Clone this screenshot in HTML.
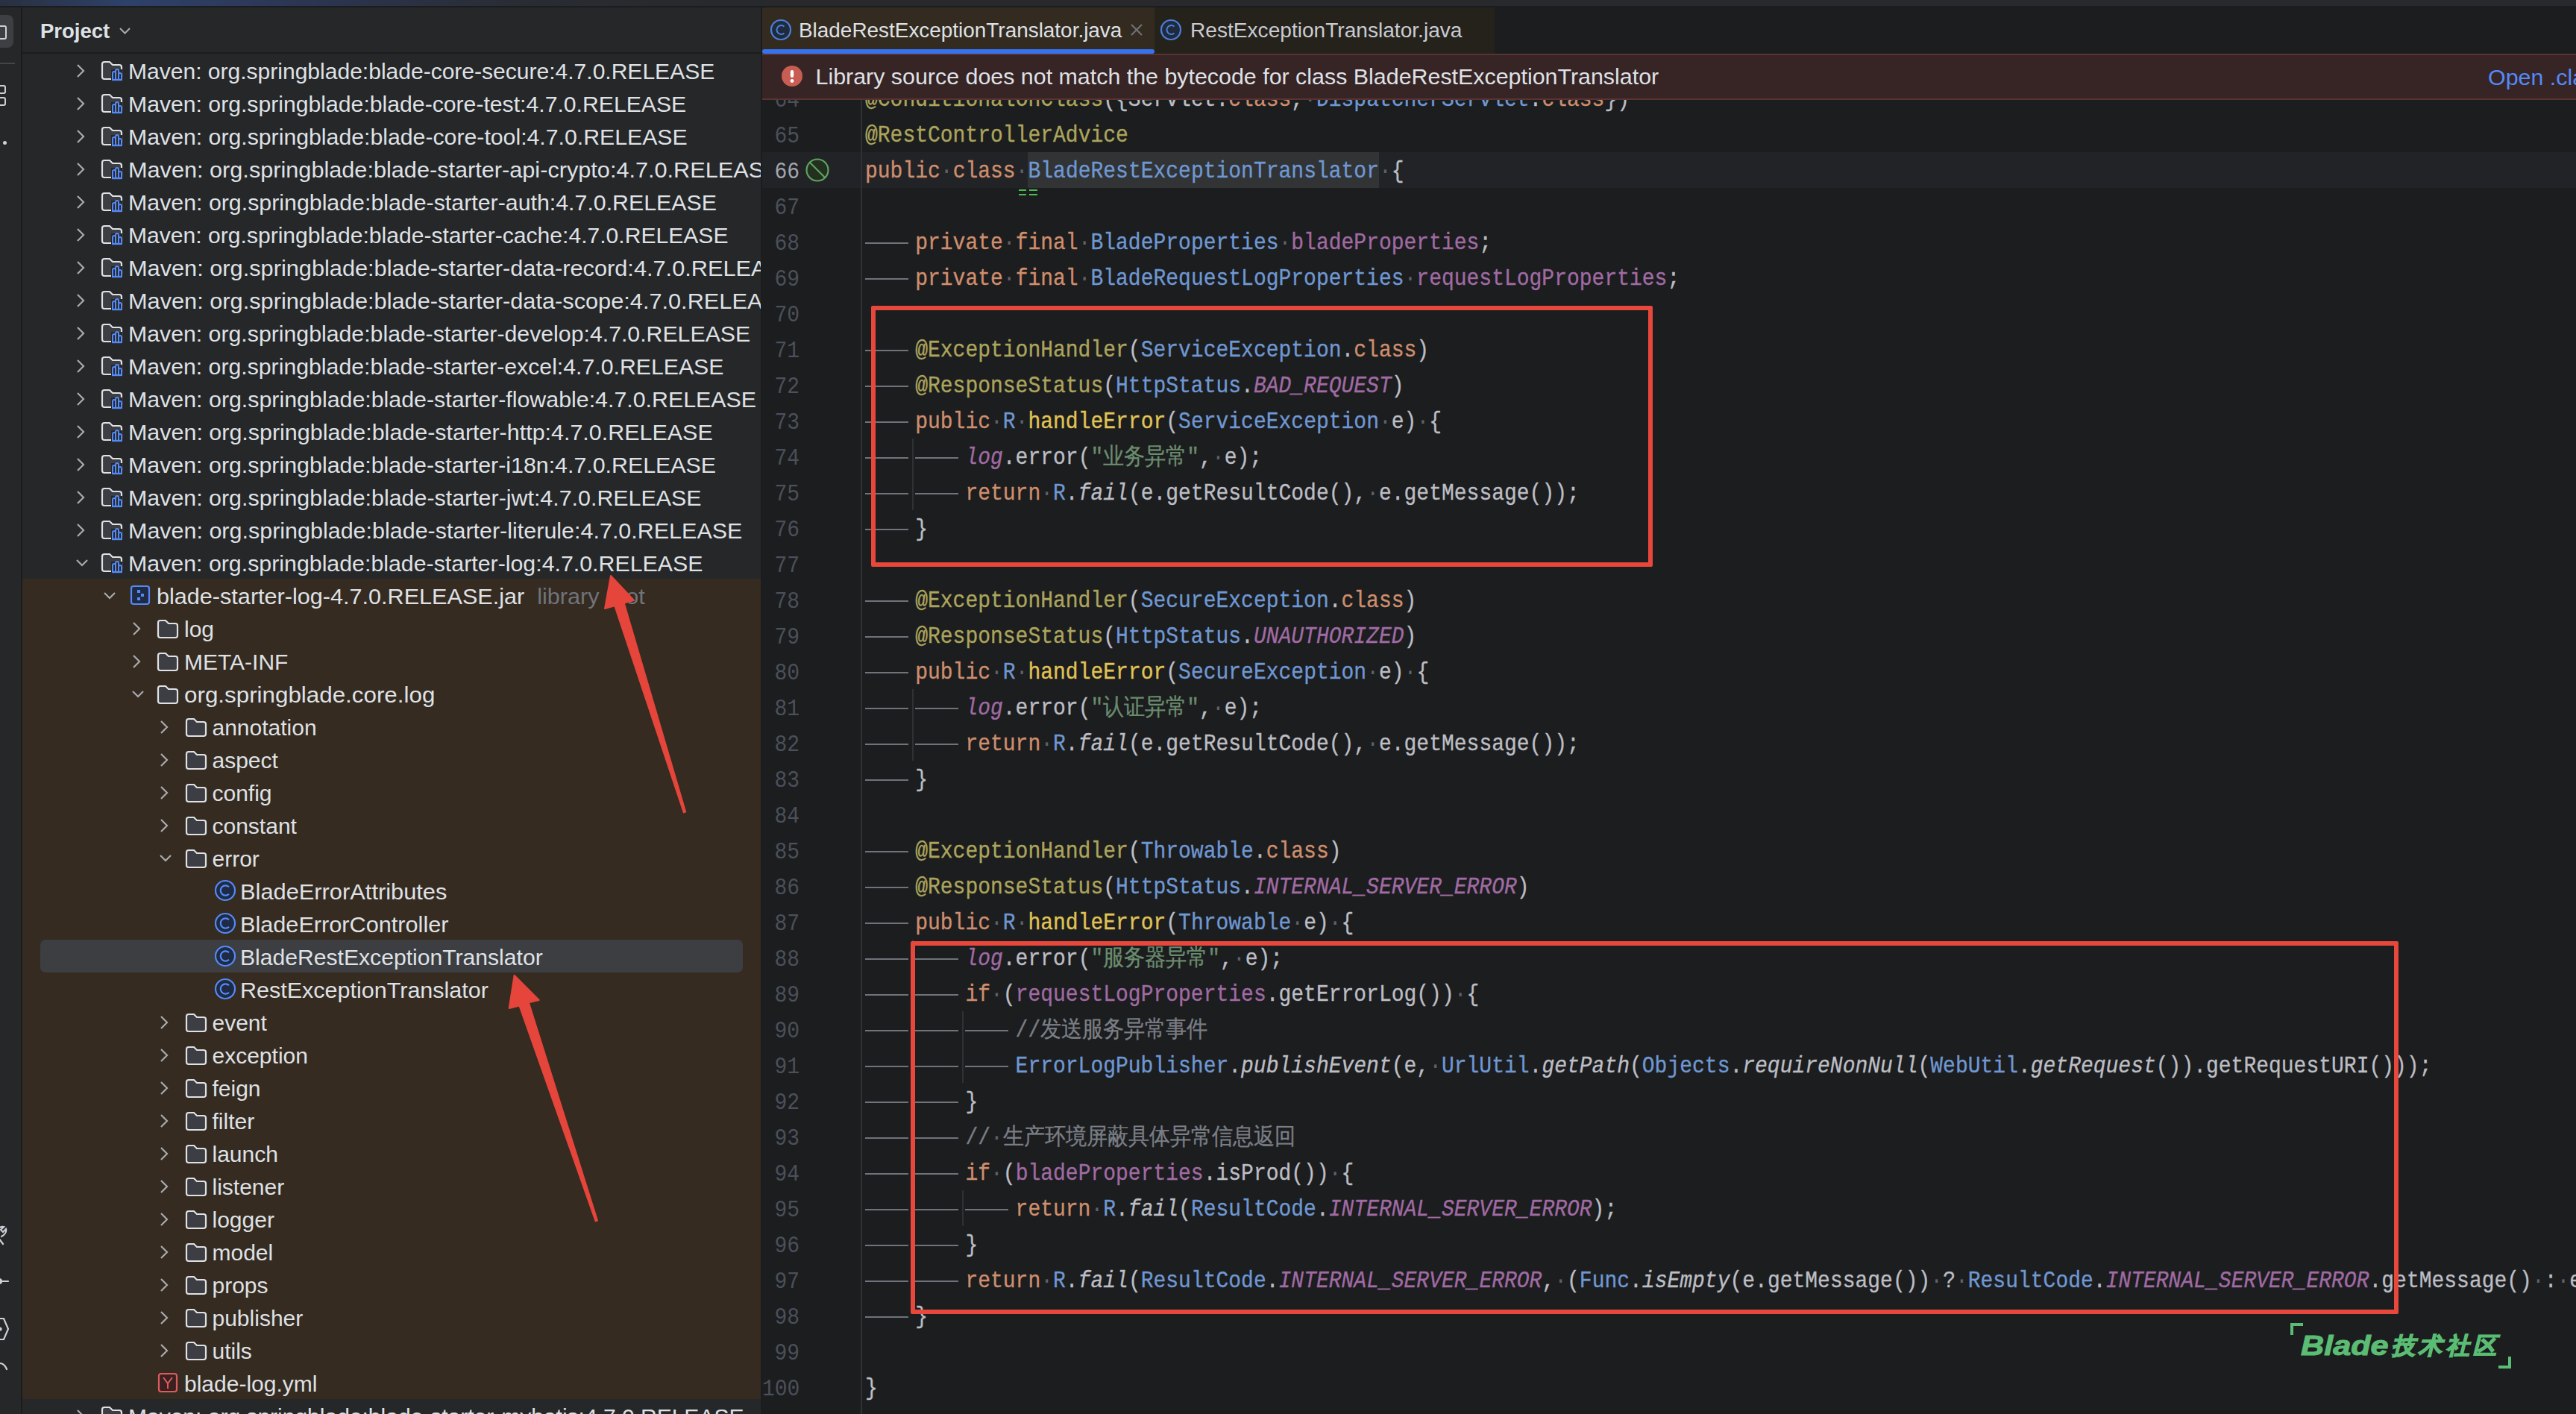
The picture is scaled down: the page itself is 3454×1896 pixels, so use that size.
<!DOCTYPE html><html><head><meta charset="utf-8"><style>
*{margin:0;padding:0;box-sizing:border-box}
html,body{width:3454px;height:1896px;overflow:hidden;background:#1c1d1f}
body{position:relative;font-family:"Liberation Sans",sans-serif;color:#dfe1e5}
.a{position:absolute}
.tr{position:absolute;height:44px;line-height:44px;font-size:30px;white-space:pre;color:#dfe1e5}
.cl{position:absolute;left:0;height:48px;line-height:48px;font-family:"Liberation Mono",monospace;font-size:28px;white-space:pre;color:#bcbec4;-webkit-text-stroke:0.3px currentColor;transform:scaleY(1.1);transform-origin:0 31px}
.ln{position:absolute;left:1022px;width:50px;text-align:right;height:48px;line-height:48px;font-family:"Liberation Mono",monospace;font-size:28px;color:#4b5059;white-space:pre;transform:scaleY(1.1);transform-origin:0 31px}
.k{color:#cf8e6d}.c{color:#6f98d2}.an{color:#aca55c}.m{color:#e0c456}.f{color:#a06ba3}
.sf{color:#a06ba3;font-style:italic}.si{font-style:italic}.s{color:#6a8c6e}.cm{color:#7a7e85}
.sp{color:#5e6166;-webkit-text-stroke:0}
.cj{display:inline-block;width:28px;text-align:center}
.tab{position:absolute;height:2px;background:#6f737a;width:58px}
.vg{position:absolute;width:2px;background:#2f3235}
</style></head><body>
<div class="a" style="left:0;top:0;width:3454px;height:8px;background:linear-gradient(90deg,#29303f 0px,#2e416a 170px,#2c3653 400px,#292c33 700px,#28292c 950px,#28292c 3454px)"></div>
<div class="a" style="left:0;top:8px;width:3454px;height:2px;background:#1b1c1e"></div>
<div class="a" style="left:0;top:10px;width:28px;height:1886px;background:#262729"></div>
<div class="a" style="left:28px;top:10px;width:2px;height:1886px;background:#1b1c1e"></div>
<div class="a" style="left:-10px;top:20px;width:28px;height:44px;border-radius:8px;background:#3d3f43"></div>
<div class="a" style="left:-4px;top:34px;width:13px;height:19px;border:2px solid #ced0d6;border-radius:3px"></div>
<div class="a" style="left:0;top:84px;width:20px;height:2px;background:#43454a"></div>
<div class="a" style="left:-4px;top:114px;width:12px;height:12px;border:2px solid #ced0d6;border-radius:3px"></div>
<div class="a" style="left:-4px;top:130px;width:12px;height:12px;border:2px solid #ced0d6;border-radius:3px"></div>
<div class="a" style="left:4px;top:189px;width:5px;height:5px;border-radius:50%;background:#ced0d6"></div>
<svg class="a" style="left:0;top:1630px" width="28" height="230" viewBox="0 0 28 230">
<g fill="none" stroke="#ced0d6" stroke-width="2.2" stroke-linecap="round">
<path d="M-2 30 L4 38 M2 28 C6 26 9 22 8 18 L4 22 L1 19 L5 15 C1 14 -3 17 -4 21"/>
<path d="M-6 88 H11"/><circle cx="-1" cy="88" r="3" fill="#ced0d6"/>
<path d="M-4 138 L5 138 L11 152 L5 166 L-4 166"/><circle cx="0" cy="152" r="1.5" fill="#ced0d6"/>
<path d="M-6 200 C0 196 6 198 9 206"/>
</g></svg>
<div class="a" style="left:30px;top:10px;width:990px;height:1886px;background:#262729"></div>
<div class="a" style="left:54px;top:14px;height:56px;line-height:56px;font-size:27.5px;font-weight:bold;color:#dfe1e5">Project</div>
<svg class="a" style="left:158px;top:36px" width="20" height="12" viewBox="0 0 20 12"><path d="M3 2 L9.5 8.5 L16 2" fill="none" stroke="#a8abb0" stroke-width="2"/></svg>
<div class="a" style="left:30px;top:70px;width:990px;height:2px;background:#1b1c1e"></div>
<div class="a" style="left:30px;top:775.5px;width:990px;height:1100.5px;background:#352b21"></div>
<div class="a" style="left:54px;top:1260px;width:942px;height:44px;border-radius:7px;background:#3c3e42"></div>
<div class="a" style="left:30px;top:72px;width:990px;height:1824px;overflow:hidden">
<svg class="a" style="left:67.5px;top:13.0px" width="20" height="20" viewBox="0 0 20 20"><path d="M6 2 L14 10 L6 18" fill="none" stroke="#a8abb0" stroke-width="2.2"/></svg>
<svg class="a" style="left:105.0px;top:9.0px" width="30" height="28" viewBox="0 0 30 28"><path d="M2 5 Q2 2 5 2 H12 L16 6 H25 Q28 6 28 9 V22 Q28 25 25 25 H5 Q2 25 2 22 Z" fill="#3c3e43" stroke="#dfe1e5" stroke-width="2.2"/><rect x="14" y="12" width="15" height="15" fill="#262729"/><path d="M16 26 V17 Q16 15 18 15 Q20 15 20 17 V26 M20 26 V14 Q20 12 22 12 Q24 12 24 14 V26 M24 26 V19 Q24 17 26 17 Q28 17 28 19 V26 Z" fill="none" stroke="#548af7" stroke-width="2"/><path d="M15 26 H28" stroke="#548af7" stroke-width="2.4"/></svg>
<div class="tr" style="left:142.0px;top:2px;transform:scaleX(1.0010);transform-origin:0 50%">Maven: org.springblade:blade-core-secure:4.7.0.RELEASE</div>
<svg class="a" style="left:67.5px;top:57.0px" width="20" height="20" viewBox="0 0 20 20"><path d="M6 2 L14 10 L6 18" fill="none" stroke="#a8abb0" stroke-width="2.2"/></svg>
<svg class="a" style="left:105.0px;top:53.0px" width="30" height="28" viewBox="0 0 30 28"><path d="M2 5 Q2 2 5 2 H12 L16 6 H25 Q28 6 28 9 V22 Q28 25 25 25 H5 Q2 25 2 22 Z" fill="#3c3e43" stroke="#dfe1e5" stroke-width="2.2"/><rect x="14" y="12" width="15" height="15" fill="#262729"/><path d="M16 26 V17 Q16 15 18 15 Q20 15 20 17 V26 M20 26 V14 Q20 12 22 12 Q24 12 24 14 V26 M24 26 V19 Q24 17 26 17 Q28 17 28 19 V26 Z" fill="none" stroke="#548af7" stroke-width="2"/><path d="M15 26 H28" stroke="#548af7" stroke-width="2.4"/></svg>
<div class="tr" style="left:142.0px;top:46px;transform:scaleX(1.0060);transform-origin:0 50%">Maven: org.springblade:blade-core-test:4.7.0.RELEASE</div>
<svg class="a" style="left:67.5px;top:101.0px" width="20" height="20" viewBox="0 0 20 20"><path d="M6 2 L14 10 L6 18" fill="none" stroke="#a8abb0" stroke-width="2.2"/></svg>
<svg class="a" style="left:105.0px;top:97.0px" width="30" height="28" viewBox="0 0 30 28"><path d="M2 5 Q2 2 5 2 H12 L16 6 H25 Q28 6 28 9 V22 Q28 25 25 25 H5 Q2 25 2 22 Z" fill="#3c3e43" stroke="#dfe1e5" stroke-width="2.2"/><rect x="14" y="12" width="15" height="15" fill="#262729"/><path d="M16 26 V17 Q16 15 18 15 Q20 15 20 17 V26 M20 26 V14 Q20 12 22 12 Q24 12 24 14 V26 M24 26 V19 Q24 17 26 17 Q28 17 28 19 V26 Z" fill="none" stroke="#548af7" stroke-width="2"/><path d="M15 26 H28" stroke="#548af7" stroke-width="2.4"/></svg>
<div class="tr" style="left:142.0px;top:90px;transform:scaleX(1.0080);transform-origin:0 50%">Maven: org.springblade:blade-core-tool:4.7.0.RELEASE</div>
<svg class="a" style="left:67.5px;top:145.0px" width="20" height="20" viewBox="0 0 20 20"><path d="M6 2 L14 10 L6 18" fill="none" stroke="#a8abb0" stroke-width="2.2"/></svg>
<svg class="a" style="left:105.0px;top:141.0px" width="30" height="28" viewBox="0 0 30 28"><path d="M2 5 Q2 2 5 2 H12 L16 6 H25 Q28 6 28 9 V22 Q28 25 25 25 H5 Q2 25 2 22 Z" fill="#3c3e43" stroke="#dfe1e5" stroke-width="2.2"/><rect x="14" y="12" width="15" height="15" fill="#262729"/><path d="M16 26 V17 Q16 15 18 15 Q20 15 20 17 V26 M20 26 V14 Q20 12 22 12 Q24 12 24 14 V26 M24 26 V19 Q24 17 26 17 Q28 17 28 19 V26 Z" fill="none" stroke="#548af7" stroke-width="2"/><path d="M15 26 H28" stroke="#548af7" stroke-width="2.4"/></svg>
<div class="tr" style="left:142.0px;top:134px;transform:scaleX(1.0220);transform-origin:0 50%">Maven: org.springblade:blade-starter-api-crypto:4.7.0.RELEASE</div>
<svg class="a" style="left:67.5px;top:189.0px" width="20" height="20" viewBox="0 0 20 20"><path d="M6 2 L14 10 L6 18" fill="none" stroke="#a8abb0" stroke-width="2.2"/></svg>
<svg class="a" style="left:105.0px;top:185.0px" width="30" height="28" viewBox="0 0 30 28"><path d="M2 5 Q2 2 5 2 H12 L16 6 H25 Q28 6 28 9 V22 Q28 25 25 25 H5 Q2 25 2 22 Z" fill="#3c3e43" stroke="#dfe1e5" stroke-width="2.2"/><rect x="14" y="12" width="15" height="15" fill="#262729"/><path d="M16 26 V17 Q16 15 18 15 Q20 15 20 17 V26 M20 26 V14 Q20 12 22 12 Q24 12 24 14 V26 M24 26 V19 Q24 17 26 17 Q28 17 28 19 V26 Z" fill="none" stroke="#548af7" stroke-width="2"/><path d="M15 26 H28" stroke="#548af7" stroke-width="2.4"/></svg>
<div class="tr" style="left:142.0px;top:178px;transform:scaleX(1.0110);transform-origin:0 50%">Maven: org.springblade:blade-starter-auth:4.7.0.RELEASE</div>
<svg class="a" style="left:67.5px;top:233.0px" width="20" height="20" viewBox="0 0 20 20"><path d="M6 2 L14 10 L6 18" fill="none" stroke="#a8abb0" stroke-width="2.2"/></svg>
<svg class="a" style="left:105.0px;top:229.0px" width="30" height="28" viewBox="0 0 30 28"><path d="M2 5 Q2 2 5 2 H12 L16 6 H25 Q28 6 28 9 V22 Q28 25 25 25 H5 Q2 25 2 22 Z" fill="#3c3e43" stroke="#dfe1e5" stroke-width="2.2"/><rect x="14" y="12" width="15" height="15" fill="#262729"/><path d="M16 26 V17 Q16 15 18 15 Q20 15 20 17 V26 M20 26 V14 Q20 12 22 12 Q24 12 24 14 V26 M24 26 V19 Q24 17 26 17 Q28 17 28 19 V26 Z" fill="none" stroke="#548af7" stroke-width="2"/><path d="M15 26 H28" stroke="#548af7" stroke-width="2.4"/></svg>
<div class="tr" style="left:142.0px;top:222px;transform:scaleX(1.0030);transform-origin:0 50%">Maven: org.springblade:blade-starter-cache:4.7.0.RELEASE</div>
<svg class="a" style="left:67.5px;top:277.0px" width="20" height="20" viewBox="0 0 20 20"><path d="M6 2 L14 10 L6 18" fill="none" stroke="#a8abb0" stroke-width="2.2"/></svg>
<svg class="a" style="left:105.0px;top:273.0px" width="30" height="28" viewBox="0 0 30 28"><path d="M2 5 Q2 2 5 2 H12 L16 6 H25 Q28 6 28 9 V22 Q28 25 25 25 H5 Q2 25 2 22 Z" fill="#3c3e43" stroke="#dfe1e5" stroke-width="2.2"/><rect x="14" y="12" width="15" height="15" fill="#262729"/><path d="M16 26 V17 Q16 15 18 15 Q20 15 20 17 V26 M20 26 V14 Q20 12 22 12 Q24 12 24 14 V26 M24 26 V19 Q24 17 26 17 Q28 17 28 19 V26 Z" fill="none" stroke="#548af7" stroke-width="2"/><path d="M15 26 H28" stroke="#548af7" stroke-width="2.4"/></svg>
<div class="tr" style="left:142.0px;top:266px;transform:scaleX(1.0240);transform-origin:0 50%">Maven: org.springblade:blade-starter-data-record:4.7.0.RELEASE</div>
<svg class="a" style="left:67.5px;top:321.0px" width="20" height="20" viewBox="0 0 20 20"><path d="M6 2 L14 10 L6 18" fill="none" stroke="#a8abb0" stroke-width="2.2"/></svg>
<svg class="a" style="left:105.0px;top:317.0px" width="30" height="28" viewBox="0 0 30 28"><path d="M2 5 Q2 2 5 2 H12 L16 6 H25 Q28 6 28 9 V22 Q28 25 25 25 H5 Q2 25 2 22 Z" fill="#3c3e43" stroke="#dfe1e5" stroke-width="2.2"/><rect x="14" y="12" width="15" height="15" fill="#262729"/><path d="M16 26 V17 Q16 15 18 15 Q20 15 20 17 V26 M20 26 V14 Q20 12 22 12 Q24 12 24 14 V26 M24 26 V19 Q24 17 26 17 Q28 17 28 19 V26 Z" fill="none" stroke="#548af7" stroke-width="2"/><path d="M15 26 H28" stroke="#548af7" stroke-width="2.4"/></svg>
<div class="tr" style="left:142.0px;top:310px;transform:scaleX(1.0240);transform-origin:0 50%">Maven: org.springblade:blade-starter-data-scope:4.7.0.RELEASE</div>
<svg class="a" style="left:67.5px;top:365.0px" width="20" height="20" viewBox="0 0 20 20"><path d="M6 2 L14 10 L6 18" fill="none" stroke="#a8abb0" stroke-width="2.2"/></svg>
<svg class="a" style="left:105.0px;top:361.0px" width="30" height="28" viewBox="0 0 30 28"><path d="M2 5 Q2 2 5 2 H12 L16 6 H25 Q28 6 28 9 V22 Q28 25 25 25 H5 Q2 25 2 22 Z" fill="#3c3e43" stroke="#dfe1e5" stroke-width="2.2"/><rect x="14" y="12" width="15" height="15" fill="#262729"/><path d="M16 26 V17 Q16 15 18 15 Q20 15 20 17 V26 M20 26 V14 Q20 12 22 12 Q24 12 24 14 V26 M24 26 V19 Q24 17 26 17 Q28 17 28 19 V26 Z" fill="none" stroke="#548af7" stroke-width="2"/><path d="M15 26 H28" stroke="#548af7" stroke-width="2.4"/></svg>
<div class="tr" style="left:142.0px;top:354px;transform:scaleX(1.0085);transform-origin:0 50%">Maven: org.springblade:blade-starter-develop:4.7.0.RELEASE</div>
<svg class="a" style="left:67.5px;top:409.0px" width="20" height="20" viewBox="0 0 20 20"><path d="M6 2 L14 10 L6 18" fill="none" stroke="#a8abb0" stroke-width="2.2"/></svg>
<svg class="a" style="left:105.0px;top:405.0px" width="30" height="28" viewBox="0 0 30 28"><path d="M2 5 Q2 2 5 2 H12 L16 6 H25 Q28 6 28 9 V22 Q28 25 25 25 H5 Q2 25 2 22 Z" fill="#3c3e43" stroke="#dfe1e5" stroke-width="2.2"/><rect x="14" y="12" width="15" height="15" fill="#262729"/><path d="M16 26 V17 Q16 15 18 15 Q20 15 20 17 V26 M20 26 V14 Q20 12 22 12 Q24 12 24 14 V26 M24 26 V19 Q24 17 26 17 Q28 17 28 19 V26 Z" fill="none" stroke="#548af7" stroke-width="2"/><path d="M15 26 H28" stroke="#548af7" stroke-width="2.4"/></svg>
<div class="tr" style="left:142.0px;top:398px;transform:scaleX(1.0080);transform-origin:0 50%">Maven: org.springblade:blade-starter-excel:4.7.0.RELEASE</div>
<svg class="a" style="left:67.5px;top:453.0px" width="20" height="20" viewBox="0 0 20 20"><path d="M6 2 L14 10 L6 18" fill="none" stroke="#a8abb0" stroke-width="2.2"/></svg>
<svg class="a" style="left:105.0px;top:449.0px" width="30" height="28" viewBox="0 0 30 28"><path d="M2 5 Q2 2 5 2 H12 L16 6 H25 Q28 6 28 9 V22 Q28 25 25 25 H5 Q2 25 2 22 Z" fill="#3c3e43" stroke="#dfe1e5" stroke-width="2.2"/><rect x="14" y="12" width="15" height="15" fill="#262729"/><path d="M16 26 V17 Q16 15 18 15 Q20 15 20 17 V26 M20 26 V14 Q20 12 22 12 Q24 12 24 14 V26 M24 26 V19 Q24 17 26 17 Q28 17 28 19 V26 Z" fill="none" stroke="#548af7" stroke-width="2"/><path d="M15 26 H28" stroke="#548af7" stroke-width="2.4"/></svg>
<div class="tr" style="left:142.0px;top:442px;transform:scaleX(1.0120);transform-origin:0 50%">Maven: org.springblade:blade-starter-flowable:4.7.0.RELEASE</div>
<svg class="a" style="left:67.5px;top:497.0px" width="20" height="20" viewBox="0 0 20 20"><path d="M6 2 L14 10 L6 18" fill="none" stroke="#a8abb0" stroke-width="2.2"/></svg>
<svg class="a" style="left:105.0px;top:493.0px" width="30" height="28" viewBox="0 0 30 28"><path d="M2 5 Q2 2 5 2 H12 L16 6 H25 Q28 6 28 9 V22 Q28 25 25 25 H5 Q2 25 2 22 Z" fill="#3c3e43" stroke="#dfe1e5" stroke-width="2.2"/><rect x="14" y="12" width="15" height="15" fill="#262729"/><path d="M16 26 V17 Q16 15 18 15 Q20 15 20 17 V26 M20 26 V14 Q20 12 22 12 Q24 12 24 14 V26 M24 26 V19 Q24 17 26 17 Q28 17 28 19 V26 Z" fill="none" stroke="#548af7" stroke-width="2"/><path d="M15 26 H28" stroke="#548af7" stroke-width="2.4"/></svg>
<div class="tr" style="left:142.0px;top:486px;transform:scaleX(1.0150);transform-origin:0 50%">Maven: org.springblade:blade-starter-htt<span>p</span>:4.7.0.RELEASE</div>
<svg class="a" style="left:67.5px;top:541.0px" width="20" height="20" viewBox="0 0 20 20"><path d="M6 2 L14 10 L6 18" fill="none" stroke="#a8abb0" stroke-width="2.2"/></svg>
<svg class="a" style="left:105.0px;top:537.0px" width="30" height="28" viewBox="0 0 30 28"><path d="M2 5 Q2 2 5 2 H12 L16 6 H25 Q28 6 28 9 V22 Q28 25 25 25 H5 Q2 25 2 22 Z" fill="#3c3e43" stroke="#dfe1e5" stroke-width="2.2"/><rect x="14" y="12" width="15" height="15" fill="#262729"/><path d="M16 26 V17 Q16 15 18 15 Q20 15 20 17 V26 M20 26 V14 Q20 12 22 12 Q24 12 24 14 V26 M24 26 V19 Q24 17 26 17 Q28 17 28 19 V26 Z" fill="none" stroke="#548af7" stroke-width="2"/><path d="M15 26 H28" stroke="#548af7" stroke-width="2.4"/></svg>
<div class="tr" style="left:142.0px;top:530px;transform:scaleX(1.0120);transform-origin:0 50%">Maven: org.springblade:blade-starter-i18n:4.7.0.RELEASE</div>
<svg class="a" style="left:67.5px;top:585.0px" width="20" height="20" viewBox="0 0 20 20"><path d="M6 2 L14 10 L6 18" fill="none" stroke="#a8abb0" stroke-width="2.2"/></svg>
<svg class="a" style="left:105.0px;top:581.0px" width="30" height="28" viewBox="0 0 30 28"><path d="M2 5 Q2 2 5 2 H12 L16 6 H25 Q28 6 28 9 V22 Q28 25 25 25 H5 Q2 25 2 22 Z" fill="#3c3e43" stroke="#dfe1e5" stroke-width="2.2"/><rect x="14" y="12" width="15" height="15" fill="#262729"/><path d="M16 26 V17 Q16 15 18 15 Q20 15 20 17 V26 M20 26 V14 Q20 12 22 12 Q24 12 24 14 V26 M24 26 V19 Q24 17 26 17 Q28 17 28 19 V26 Z" fill="none" stroke="#548af7" stroke-width="2"/><path d="M15 26 H28" stroke="#548af7" stroke-width="2.4"/></svg>
<div class="tr" style="left:142.0px;top:574px;transform:scaleX(1.0130);transform-origin:0 50%">Maven: org.springblade:blade-starter-jwt:4.7.0.RELEASE</div>
<svg class="a" style="left:67.5px;top:629.0px" width="20" height="20" viewBox="0 0 20 20"><path d="M6 2 L14 10 L6 18" fill="none" stroke="#a8abb0" stroke-width="2.2"/></svg>
<svg class="a" style="left:105.0px;top:625.0px" width="30" height="28" viewBox="0 0 30 28"><path d="M2 5 Q2 2 5 2 H12 L16 6 H25 Q28 6 28 9 V22 Q28 25 25 25 H5 Q2 25 2 22 Z" fill="#3c3e43" stroke="#dfe1e5" stroke-width="2.2"/><rect x="14" y="12" width="15" height="15" fill="#262729"/><path d="M16 26 V17 Q16 15 18 15 Q20 15 20 17 V26 M20 26 V14 Q20 12 22 12 Q24 12 24 14 V26 M24 26 V19 Q24 17 26 17 Q28 17 28 19 V26 Z" fill="none" stroke="#548af7" stroke-width="2"/><path d="M15 26 H28" stroke="#548af7" stroke-width="2.4"/></svg>
<div class="tr" style="left:142.0px;top:618px;transform:scaleX(1.0160);transform-origin:0 50%">Maven: org.springblade:blade-starter-literule:4.7.0.RELEASE</div>
<svg class="a" style="left:69.5px;top:673.0px" width="20" height="20" viewBox="0 0 20 20"><path d="M3 6 L10 13 L17 6" fill="none" stroke="#a8abb0" stroke-width="2.2"/></svg>
<svg class="a" style="left:105.0px;top:669.0px" width="30" height="28" viewBox="0 0 30 28"><path d="M2 5 Q2 2 5 2 H12 L16 6 H25 Q28 6 28 9 V22 Q28 25 25 25 H5 Q2 25 2 22 Z" fill="#3c3e43" stroke="#dfe1e5" stroke-width="2.2"/><rect x="14" y="12" width="15" height="15" fill="#262729"/><path d="M16 26 V17 Q16 15 18 15 Q20 15 20 17 V26 M20 26 V14 Q20 12 22 12 Q24 12 24 14 V26 M24 26 V19 Q24 17 26 17 Q28 17 28 19 V26 Z" fill="none" stroke="#548af7" stroke-width="2"/><path d="M15 26 H28" stroke="#548af7" stroke-width="2.4"/></svg>
<div class="tr" style="left:142.0px;top:662px;transform:scaleX(1.0110);transform-origin:0 50%">Maven: org.springblade:blade-starter-log:4.7.0.RELEASE</div>
<svg class="a" style="left:107.0px;top:717.0px" width="20" height="20" viewBox="0 0 20 20"><path d="M3 6 L10 13 L17 6" fill="none" stroke="#a8abb0" stroke-width="2.2"/></svg>
<svg class="a" style="left:143.5px;top:712.0px" width="28" height="28" viewBox="0 0 28 28"><rect x="2" y="2" width="24" height="24" rx="3" fill="#1f2a44" stroke="#548af7" stroke-width="2.2"/><rect x="10" y="7" width="4" height="4" fill="#548af7"/><rect x="15" y="12" width="4" height="4" fill="#548af7"/><rect x="10" y="17" width="4" height="4" fill="#548af7"/></svg>
<div class="tr" style="left:179.5px;top:706px;transform:scaleX(1.0200);transform-origin:0 50%">blade-starter-log-4.7.0.RELEASE.jar  <span style="color:#70747b">library root</span></div>
<svg class="a" style="left:142.5px;top:761.0px" width="20" height="20" viewBox="0 0 20 20"><path d="M6 2 L14 10 L6 18" fill="none" stroke="#a8abb0" stroke-width="2.2"/></svg>
<svg class="a" style="left:180.0px;top:758.0px" width="30" height="28" viewBox="0 0 30 28"><path d="M2 5 Q2 2 5 2 H12 L16 6 H25 Q28 6 28 9 V22 Q28 25 25 25 H5 Q2 25 2 22 Z" fill="#3c3e43" stroke="#dfe1e5" stroke-width="2.2"/></svg>
<div class="tr" style="left:217.0px;top:750px">log</div>
<svg class="a" style="left:142.5px;top:805.0px" width="20" height="20" viewBox="0 0 20 20"><path d="M6 2 L14 10 L6 18" fill="none" stroke="#a8abb0" stroke-width="2.2"/></svg>
<svg class="a" style="left:180.0px;top:802.0px" width="30" height="28" viewBox="0 0 30 28"><path d="M2 5 Q2 2 5 2 H12 L16 6 H25 Q28 6 28 9 V22 Q28 25 25 25 H5 Q2 25 2 22 Z" fill="#3c3e43" stroke="#dfe1e5" stroke-width="2.2"/></svg>
<div class="tr" style="left:217.0px;top:794px">META-INF</div>
<svg class="a" style="left:144.5px;top:849.0px" width="20" height="20" viewBox="0 0 20 20"><path d="M3 6 L10 13 L17 6" fill="none" stroke="#a8abb0" stroke-width="2.2"/></svg>
<svg class="a" style="left:180.0px;top:846.0px" width="30" height="28" viewBox="0 0 30 28"><path d="M2 5 Q2 2 5 2 H12 L16 6 H25 Q28 6 28 9 V22 Q28 25 25 25 H5 Q2 25 2 22 Z" fill="#3c3e43" stroke="#dfe1e5" stroke-width="2.2"/></svg>
<div class="tr" style="left:217.0px;top:838px;transform:scaleX(1.0450);transform-origin:0 50%">org.springblade.core.log</div>
<svg class="a" style="left:180.0px;top:893.0px" width="20" height="20" viewBox="0 0 20 20"><path d="M6 2 L14 10 L6 18" fill="none" stroke="#a8abb0" stroke-width="2.2"/></svg>
<svg class="a" style="left:217.5px;top:890.0px" width="30" height="28" viewBox="0 0 30 28"><path d="M2 5 Q2 2 5 2 H12 L16 6 H25 Q28 6 28 9 V22 Q28 25 25 25 H5 Q2 25 2 22 Z" fill="#3c3e43" stroke="#dfe1e5" stroke-width="2.2"/></svg>
<div class="tr" style="left:254.5px;top:882px">annotation</div>
<svg class="a" style="left:180.0px;top:937.0px" width="20" height="20" viewBox="0 0 20 20"><path d="M6 2 L14 10 L6 18" fill="none" stroke="#a8abb0" stroke-width="2.2"/></svg>
<svg class="a" style="left:217.5px;top:934.0px" width="30" height="28" viewBox="0 0 30 28"><path d="M2 5 Q2 2 5 2 H12 L16 6 H25 Q28 6 28 9 V22 Q28 25 25 25 H5 Q2 25 2 22 Z" fill="#3c3e43" stroke="#dfe1e5" stroke-width="2.2"/></svg>
<div class="tr" style="left:254.5px;top:926px">aspect</div>
<svg class="a" style="left:180.0px;top:981.0px" width="20" height="20" viewBox="0 0 20 20"><path d="M6 2 L14 10 L6 18" fill="none" stroke="#a8abb0" stroke-width="2.2"/></svg>
<svg class="a" style="left:217.5px;top:978.0px" width="30" height="28" viewBox="0 0 30 28"><path d="M2 5 Q2 2 5 2 H12 L16 6 H25 Q28 6 28 9 V22 Q28 25 25 25 H5 Q2 25 2 22 Z" fill="#3c3e43" stroke="#dfe1e5" stroke-width="2.2"/></svg>
<div class="tr" style="left:254.5px;top:970px">config</div>
<svg class="a" style="left:180.0px;top:1025.0px" width="20" height="20" viewBox="0 0 20 20"><path d="M6 2 L14 10 L6 18" fill="none" stroke="#a8abb0" stroke-width="2.2"/></svg>
<svg class="a" style="left:217.5px;top:1022.0px" width="30" height="28" viewBox="0 0 30 28"><path d="M2 5 Q2 2 5 2 H12 L16 6 H25 Q28 6 28 9 V22 Q28 25 25 25 H5 Q2 25 2 22 Z" fill="#3c3e43" stroke="#dfe1e5" stroke-width="2.2"/></svg>
<div class="tr" style="left:254.5px;top:1014px">constant</div>
<svg class="a" style="left:182.0px;top:1069.0px" width="20" height="20" viewBox="0 0 20 20"><path d="M3 6 L10 13 L17 6" fill="none" stroke="#a8abb0" stroke-width="2.2"/></svg>
<svg class="a" style="left:217.5px;top:1066.0px" width="30" height="28" viewBox="0 0 30 28"><path d="M2 5 Q2 2 5 2 H12 L16 6 H25 Q28 6 28 9 V22 Q28 25 25 25 H5 Q2 25 2 22 Z" fill="#3c3e43" stroke="#dfe1e5" stroke-width="2.2"/></svg>
<div class="tr" style="left:254.5px;top:1058px">error</div>
<svg class="a" style="left:256.5px;top:1107.0px" width="30" height="30" viewBox="0 0 30 30"><circle cx="15" cy="15" r="13" fill="#1f2a44" stroke="#548af7" stroke-width="2.2"/><path d="M20 10.3 A6.6 6.6 0 1 0 20 19.7" fill="none" stroke="#548af7" stroke-width="2.2"/></svg>
<div class="tr" style="left:292.0px;top:1102px;transform:scaleX(1.0270);transform-origin:0 50%">BladeErrorAttributes</div>
<svg class="a" style="left:256.5px;top:1151.0px" width="30" height="30" viewBox="0 0 30 30"><circle cx="15" cy="15" r="13" fill="#1f2a44" stroke="#548af7" stroke-width="2.2"/><path d="M20 10.3 A6.6 6.6 0 1 0 20 19.7" fill="none" stroke="#548af7" stroke-width="2.2"/></svg>
<div class="tr" style="left:292.0px;top:1146px;transform:scaleX(1.0220);transform-origin:0 50%">BladeErrorController</div>
<svg class="a" style="left:256.5px;top:1195.0px" width="30" height="30" viewBox="0 0 30 30"><circle cx="15" cy="15" r="13" fill="#1f2a44" stroke="#548af7" stroke-width="2.2"/><path d="M20 10.3 A6.6 6.6 0 1 0 20 19.7" fill="none" stroke="#548af7" stroke-width="2.2"/></svg>
<div class="tr" style="left:292.0px;top:1190px;transform:scaleX(1.0040);transform-origin:0 50%">BladeRestExceptionTranslator</div>
<svg class="a" style="left:256.5px;top:1239.0px" width="30" height="30" viewBox="0 0 30 30"><circle cx="15" cy="15" r="13" fill="#1f2a44" stroke="#548af7" stroke-width="2.2"/><path d="M20 10.3 A6.6 6.6 0 1 0 20 19.7" fill="none" stroke="#548af7" stroke-width="2.2"/></svg>
<div class="tr" style="left:292.0px;top:1234px;transform:scaleX(1.0170);transform-origin:0 50%">RestExceptionTranslator</div>
<svg class="a" style="left:180.0px;top:1289.0px" width="20" height="20" viewBox="0 0 20 20"><path d="M6 2 L14 10 L6 18" fill="none" stroke="#a8abb0" stroke-width="2.2"/></svg>
<svg class="a" style="left:217.5px;top:1286.0px" width="30" height="28" viewBox="0 0 30 28"><path d="M2 5 Q2 2 5 2 H12 L16 6 H25 Q28 6 28 9 V22 Q28 25 25 25 H5 Q2 25 2 22 Z" fill="#3c3e43" stroke="#dfe1e5" stroke-width="2.2"/></svg>
<div class="tr" style="left:254.5px;top:1278px">event</div>
<svg class="a" style="left:180.0px;top:1333.0px" width="20" height="20" viewBox="0 0 20 20"><path d="M6 2 L14 10 L6 18" fill="none" stroke="#a8abb0" stroke-width="2.2"/></svg>
<svg class="a" style="left:217.5px;top:1330.0px" width="30" height="28" viewBox="0 0 30 28"><path d="M2 5 Q2 2 5 2 H12 L16 6 H25 Q28 6 28 9 V22 Q28 25 25 25 H5 Q2 25 2 22 Z" fill="#3c3e43" stroke="#dfe1e5" stroke-width="2.2"/></svg>
<div class="tr" style="left:254.5px;top:1322px">exception</div>
<svg class="a" style="left:180.0px;top:1377.0px" width="20" height="20" viewBox="0 0 20 20"><path d="M6 2 L14 10 L6 18" fill="none" stroke="#a8abb0" stroke-width="2.2"/></svg>
<svg class="a" style="left:217.5px;top:1374.0px" width="30" height="28" viewBox="0 0 30 28"><path d="M2 5 Q2 2 5 2 H12 L16 6 H25 Q28 6 28 9 V22 Q28 25 25 25 H5 Q2 25 2 22 Z" fill="#3c3e43" stroke="#dfe1e5" stroke-width="2.2"/></svg>
<div class="tr" style="left:254.5px;top:1366px">feign</div>
<svg class="a" style="left:180.0px;top:1421.0px" width="20" height="20" viewBox="0 0 20 20"><path d="M6 2 L14 10 L6 18" fill="none" stroke="#a8abb0" stroke-width="2.2"/></svg>
<svg class="a" style="left:217.5px;top:1418.0px" width="30" height="28" viewBox="0 0 30 28"><path d="M2 5 Q2 2 5 2 H12 L16 6 H25 Q28 6 28 9 V22 Q28 25 25 25 H5 Q2 25 2 22 Z" fill="#3c3e43" stroke="#dfe1e5" stroke-width="2.2"/></svg>
<div class="tr" style="left:254.5px;top:1410px">filter</div>
<svg class="a" style="left:180.0px;top:1465.0px" width="20" height="20" viewBox="0 0 20 20"><path d="M6 2 L14 10 L6 18" fill="none" stroke="#a8abb0" stroke-width="2.2"/></svg>
<svg class="a" style="left:217.5px;top:1462.0px" width="30" height="28" viewBox="0 0 30 28"><path d="M2 5 Q2 2 5 2 H12 L16 6 H25 Q28 6 28 9 V22 Q28 25 25 25 H5 Q2 25 2 22 Z" fill="#3c3e43" stroke="#dfe1e5" stroke-width="2.2"/></svg>
<div class="tr" style="left:254.5px;top:1454px">launch</div>
<svg class="a" style="left:180.0px;top:1509.0px" width="20" height="20" viewBox="0 0 20 20"><path d="M6 2 L14 10 L6 18" fill="none" stroke="#a8abb0" stroke-width="2.2"/></svg>
<svg class="a" style="left:217.5px;top:1506.0px" width="30" height="28" viewBox="0 0 30 28"><path d="M2 5 Q2 2 5 2 H12 L16 6 H25 Q28 6 28 9 V22 Q28 25 25 25 H5 Q2 25 2 22 Z" fill="#3c3e43" stroke="#dfe1e5" stroke-width="2.2"/></svg>
<div class="tr" style="left:254.5px;top:1498px">listener</div>
<svg class="a" style="left:180.0px;top:1553.0px" width="20" height="20" viewBox="0 0 20 20"><path d="M6 2 L14 10 L6 18" fill="none" stroke="#a8abb0" stroke-width="2.2"/></svg>
<svg class="a" style="left:217.5px;top:1550.0px" width="30" height="28" viewBox="0 0 30 28"><path d="M2 5 Q2 2 5 2 H12 L16 6 H25 Q28 6 28 9 V22 Q28 25 25 25 H5 Q2 25 2 22 Z" fill="#3c3e43" stroke="#dfe1e5" stroke-width="2.2"/></svg>
<div class="tr" style="left:254.5px;top:1542px">logger</div>
<svg class="a" style="left:180.0px;top:1597.0px" width="20" height="20" viewBox="0 0 20 20"><path d="M6 2 L14 10 L6 18" fill="none" stroke="#a8abb0" stroke-width="2.2"/></svg>
<svg class="a" style="left:217.5px;top:1594.0px" width="30" height="28" viewBox="0 0 30 28"><path d="M2 5 Q2 2 5 2 H12 L16 6 H25 Q28 6 28 9 V22 Q28 25 25 25 H5 Q2 25 2 22 Z" fill="#3c3e43" stroke="#dfe1e5" stroke-width="2.2"/></svg>
<div class="tr" style="left:254.5px;top:1586px">model</div>
<svg class="a" style="left:180.0px;top:1641.0px" width="20" height="20" viewBox="0 0 20 20"><path d="M6 2 L14 10 L6 18" fill="none" stroke="#a8abb0" stroke-width="2.2"/></svg>
<svg class="a" style="left:217.5px;top:1638.0px" width="30" height="28" viewBox="0 0 30 28"><path d="M2 5 Q2 2 5 2 H12 L16 6 H25 Q28 6 28 9 V22 Q28 25 25 25 H5 Q2 25 2 22 Z" fill="#3c3e43" stroke="#dfe1e5" stroke-width="2.2"/></svg>
<div class="tr" style="left:254.5px;top:1630px">props</div>
<svg class="a" style="left:180.0px;top:1685.0px" width="20" height="20" viewBox="0 0 20 20"><path d="M6 2 L14 10 L6 18" fill="none" stroke="#a8abb0" stroke-width="2.2"/></svg>
<svg class="a" style="left:217.5px;top:1682.0px" width="30" height="28" viewBox="0 0 30 28"><path d="M2 5 Q2 2 5 2 H12 L16 6 H25 Q28 6 28 9 V22 Q28 25 25 25 H5 Q2 25 2 22 Z" fill="#3c3e43" stroke="#dfe1e5" stroke-width="2.2"/></svg>
<div class="tr" style="left:254.5px;top:1674px">publisher</div>
<svg class="a" style="left:180.0px;top:1729.0px" width="20" height="20" viewBox="0 0 20 20"><path d="M6 2 L14 10 L6 18" fill="none" stroke="#a8abb0" stroke-width="2.2"/></svg>
<svg class="a" style="left:217.5px;top:1726.0px" width="30" height="28" viewBox="0 0 30 28"><path d="M2 5 Q2 2 5 2 H12 L16 6 H25 Q28 6 28 9 V22 Q28 25 25 25 H5 Q2 25 2 22 Z" fill="#3c3e43" stroke="#dfe1e5" stroke-width="2.2"/></svg>
<div class="tr" style="left:254.5px;top:1718px">utils</div>
<svg class="a" style="left:181.0px;top:1768.0px" width="28" height="28" viewBox="0 0 28 28"><rect x="2" y="2" width="24" height="24" rx="3" fill="#3a2020" stroke="#db5c5c" stroke-width="2.2"/><path d="M8 7 L14 15 L20 7 M14 15 V22" fill="none" stroke="#db5c5c" stroke-width="2"/></svg>
<div class="tr" style="left:217.0px;top:1762px">blade-log.yml</div>
<svg class="a" style="left:67.5px;top:1817.0px" width="20" height="20" viewBox="0 0 20 20"><path d="M6 2 L14 10 L6 18" fill="none" stroke="#a8abb0" stroke-width="2.2"/></svg>
<svg class="a" style="left:105.0px;top:1813.0px" width="30" height="28" viewBox="0 0 30 28"><path d="M2 5 Q2 2 5 2 H12 L16 6 H25 Q28 6 28 9 V22 Q28 25 25 25 H5 Q2 25 2 22 Z" fill="#3c3e43" stroke="#dfe1e5" stroke-width="2.2"/><rect x="14" y="12" width="15" height="15" fill="#262729"/><path d="M16 26 V17 Q16 15 18 15 Q20 15 20 17 V26 M20 26 V14 Q20 12 22 12 Q24 12 24 14 V26 M24 26 V19 Q24 17 26 17 Q28 17 28 19 V26 Z" fill="none" stroke="#548af7" stroke-width="2"/><path d="M15 26 H28" stroke="#548af7" stroke-width="2.4"/></svg>
<div class="tr" style="left:142.0px;top:1806px">Maven: org.springblade:blade-starter-mybatis:4.7.0.RELEASE</div>
</div>
<div class="a" style="left:1020px;top:10px;width:2px;height:1886px;background:#1b1c1e"></div>
<div class="a" style="left:1022px;top:10px;width:526px;height:62px;background:#342b20"></div>
<div class="a" style="left:1548px;top:10px;width:456px;height:62px;background:#25221c"></div>
<div class="a" style="left:1022px;top:66px;width:526px;height:6px;border-radius:3px;background:#3574f0"></div>
<svg class="a" style="left:1031.5px;top:25.0px" width="30" height="30" viewBox="0 0 30 30"><circle cx="15" cy="15" r="13" fill="#1f2a3d" stroke="#4b7fd8" stroke-width="2.2"/><path d="M19.5 10.5 A6 6 0 1 0 19.5 19.5" fill="none" stroke="#4b7fd8" stroke-width="2"/></svg>
<div class="a" style="left:1071px;top:19px;height:44px;line-height:44px;font-size:27.7px;white-space:pre;color:#dfe1e5;transform:scaleX(1.008);transform-origin:0 50%">BladeRestExceptionTranslator.java</div>
<svg class="a" style="left:1515px;top:31px" width="18" height="18" viewBox="0 0 18 18"><path d="M2 2 L16 16 M16 2 L2 16" stroke="#6f737a" stroke-width="2"/></svg>
<svg class="a" style="left:1555.0px;top:25.0px" width="30" height="30" viewBox="0 0 30 30"><circle cx="15" cy="15" r="13" fill="#1f2a3d" stroke="#4b7fd8" stroke-width="2.2"/><path d="M19.5 10.5 A6 6 0 1 0 19.5 19.5" fill="none" stroke="#4b7fd8" stroke-width="2"/></svg>
<div class="a" style="left:1596px;top:19px;height:44px;line-height:44px;font-size:27.7px;white-space:pre;color:#c9cbd0;transform:scaleX(1.015);transform-origin:0 50%">RestExceptionTranslator.java</div>
<div class="a" style="left:1022px;top:204px;width:2432px;height:48px;background:#222327"></div>
<div class="a" style="left:1378.4px;top:204px;width:470.4px;height:48px;background:#313335"></div>
<div class="a" style="left:1366px;top:254px;width:10px;height:2px;background:#4cbb52"></div>
<div class="a" style="left:1380px;top:254px;width:11px;height:2px;background:#4cbb52"></div>
<div class="a" style="left:1366px;top:260px;width:10px;height:2px;background:#4cbb52"></div>
<div class="a" style="left:1380px;top:260px;width:11px;height:2px;background:#4cbb52"></div>
<div class="a" style="left:1154px;top:134px;width:2px;height:1762px;background:#2f3235"></div>
<svg class="a" style="left:1079px;top:211px" width="34" height="34" viewBox="0 0 34 34"><circle cx="17" cy="17" r="14.5" fill="#24301f" stroke="#5fa35f" stroke-width="2.2"/><path d="M7 7 L27 27" stroke="#5fa35f" stroke-width="2.2"/></svg>
<div class="a" style="left:0;top:134px;width:3454px;height:1762px;overflow:hidden">
<div class="ln" style="top:-22.0px">64</div>
<div class="cl" style="left:1160.0px;top:-23.0px"><span class="an">@ConditionalOnClass</span>({Servlet.<span class="k">class</span>,<span class="sp">·</span><span class="c">DispatcherServlet</span>.<span class="k">class</span>})</div>
<div class="ln" style="top:26.0px">65</div>
<div class="cl" style="left:1160.0px;top:25.0px"><span class="an">@RestControllerAdvice</span></div>
<div class="ln" style="top:74.0px;color:#a3a6ad">66</div>
<div class="cl" style="left:1160.0px;top:73.0px"><span class="k">public</span><span class="sp">·</span><span class="k">class</span><span class="sp">·</span><span class="c">BladeRestExceptionTranslator</span><span class="sp">·</span>{</div>
<div class="ln" style="top:122.0px">67</div>
<div class="cl" style="left:1160.0px;top:121.0px"></div>
<div class="ln" style="top:170.0px">68</div>
<div class="tab" style="left:1160.0px;top:190.5px"></div>
<div class="cl" style="left:1227.2px;top:169.0px"><span class="k">private</span><span class="sp">·</span><span class="k">final</span><span class="sp">·</span><span class="c">BladeProperties</span><span class="sp">·</span><span class="f">bladeProperties</span>;</div>
<div class="ln" style="top:218.0px">69</div>
<div class="tab" style="left:1160.0px;top:238.5px"></div>
<div class="cl" style="left:1227.2px;top:217.0px"><span class="k">private</span><span class="sp">·</span><span class="k">final</span><span class="sp">·</span><span class="c">BladeRequestLogProperties</span><span class="sp">·</span><span class="f">requestLogProperties</span>;</div>
<div class="ln" style="top:266.0px">70</div>
<div class="cl" style="left:1160.0px;top:265.0px"></div>
<div class="ln" style="top:314.0px">71</div>
<div class="tab" style="left:1160.0px;top:334.5px"></div>
<div class="cl" style="left:1227.2px;top:313.0px"><span class="an">@ExceptionHandler</span>(<span class="c">ServiceException</span>.<span class="k">class</span>)</div>
<div class="ln" style="top:362.0px">72</div>
<div class="tab" style="left:1160.0px;top:382.5px"></div>
<div class="cl" style="left:1227.2px;top:361.0px"><span class="an">@ResponseStatus</span>(<span class="c">HttpStatus</span>.<span class="sf">BAD_REQUEST</span>)</div>
<div class="ln" style="top:410.0px">73</div>
<div class="tab" style="left:1160.0px;top:430.5px"></div>
<div class="cl" style="left:1227.2px;top:409.0px"><span class="k">public</span><span class="sp">·</span><span class="c">R</span><span class="sp">·</span><span class="m">handleError</span>(<span class="c">ServiceException</span><span class="sp">·</span>e)<span class="sp">·</span>{</div>
<div class="ln" style="top:458.0px">74</div>
<div class="tab" style="left:1160.0px;top:478.5px"></div>
<div class="tab" style="left:1227.2px;top:478.5px"></div>
<div class="cl" style="left:1294.4px;top:457.0px"><span class="sf">log</span>.error(<span class="s">&quot;<span class="cj">业</span><span class="cj">务</span><span class="cj">异</span><span class="cj">常</span>&quot;</span>,<span class="sp">·</span>e);</div>
<div class="ln" style="top:506.0px">75</div>
<div class="tab" style="left:1160.0px;top:526.5px"></div>
<div class="tab" style="left:1227.2px;top:526.5px"></div>
<div class="cl" style="left:1294.4px;top:505.0px"><span class="k">return</span><span class="sp">·</span><span class="c">R</span>.<span class="si">fail</span>(e.getResultCode(),<span class="sp">·</span>e.getMessage());</div>
<div class="ln" style="top:554.0px">76</div>
<div class="tab" style="left:1160.0px;top:574.5px"></div>
<div class="cl" style="left:1227.2px;top:553.0px">}</div>
<div class="ln" style="top:602.0px">77</div>
<div class="cl" style="left:1160.0px;top:601.0px"></div>
<div class="ln" style="top:650.0px">78</div>
<div class="tab" style="left:1160.0px;top:670.5px"></div>
<div class="cl" style="left:1227.2px;top:649.0px"><span class="an">@ExceptionHandler</span>(<span class="c">SecureException</span>.<span class="k">class</span>)</div>
<div class="ln" style="top:698.0px">79</div>
<div class="tab" style="left:1160.0px;top:718.5px"></div>
<div class="cl" style="left:1227.2px;top:697.0px"><span class="an">@ResponseStatus</span>(<span class="c">HttpStatus</span>.<span class="sf">UNAUTHORIZED</span>)</div>
<div class="ln" style="top:746.0px">80</div>
<div class="tab" style="left:1160.0px;top:766.5px"></div>
<div class="cl" style="left:1227.2px;top:745.0px"><span class="k">public</span><span class="sp">·</span><span class="c">R</span><span class="sp">·</span><span class="m">handleError</span>(<span class="c">SecureException</span><span class="sp">·</span>e)<span class="sp">·</span>{</div>
<div class="ln" style="top:794.0px">81</div>
<div class="tab" style="left:1160.0px;top:814.5px"></div>
<div class="tab" style="left:1227.2px;top:814.5px"></div>
<div class="cl" style="left:1294.4px;top:793.0px"><span class="sf">log</span>.error(<span class="s">&quot;<span class="cj">认</span><span class="cj">证</span><span class="cj">异</span><span class="cj">常</span>&quot;</span>,<span class="sp">·</span>e);</div>
<div class="ln" style="top:842.0px">82</div>
<div class="tab" style="left:1160.0px;top:862.5px"></div>
<div class="tab" style="left:1227.2px;top:862.5px"></div>
<div class="cl" style="left:1294.4px;top:841.0px"><span class="k">return</span><span class="sp">·</span><span class="c">R</span>.<span class="si">fail</span>(e.getResultCode(),<span class="sp">·</span>e.getMessage());</div>
<div class="ln" style="top:890.0px">83</div>
<div class="tab" style="left:1160.0px;top:910.5px"></div>
<div class="cl" style="left:1227.2px;top:889.0px">}</div>
<div class="ln" style="top:938.0px">84</div>
<div class="cl" style="left:1160.0px;top:937.0px"></div>
<div class="ln" style="top:986.0px">85</div>
<div class="tab" style="left:1160.0px;top:1006.5px"></div>
<div class="cl" style="left:1227.2px;top:985.0px"><span class="an">@ExceptionHandler</span>(<span class="c">Throwable</span>.<span class="k">class</span>)</div>
<div class="ln" style="top:1034.0px">86</div>
<div class="tab" style="left:1160.0px;top:1054.5px"></div>
<div class="cl" style="left:1227.2px;top:1033.0px"><span class="an">@ResponseStatus</span>(<span class="c">HttpStatus</span>.<span class="sf">INTERNAL_SERVER_ERROR</span>)</div>
<div class="ln" style="top:1082.0px">87</div>
<div class="tab" style="left:1160.0px;top:1102.5px"></div>
<div class="cl" style="left:1227.2px;top:1081.0px"><span class="k">public</span><span class="sp">·</span><span class="c">R</span><span class="sp">·</span><span class="m">handleError</span>(<span class="c">Throwable</span><span class="sp">·</span>e)<span class="sp">·</span>{</div>
<div class="ln" style="top:1130.0px">88</div>
<div class="tab" style="left:1160.0px;top:1150.5px"></div>
<div class="tab" style="left:1227.2px;top:1150.5px"></div>
<div class="cl" style="left:1294.4px;top:1129.0px"><span class="sf">log</span>.error(<span class="s">&quot;<span class="cj">服</span><span class="cj">务</span><span class="cj">器</span><span class="cj">异</span><span class="cj">常</span>&quot;</span>,<span class="sp">·</span>e);</div>
<div class="ln" style="top:1178.0px">89</div>
<div class="tab" style="left:1160.0px;top:1198.5px"></div>
<div class="tab" style="left:1227.2px;top:1198.5px"></div>
<div class="cl" style="left:1294.4px;top:1177.0px"><span class="k">if</span><span class="sp">·</span>(<span class="f">requestLogProperties</span>.getErrorLog())<span class="sp">·</span>{</div>
<div class="ln" style="top:1226.0px">90</div>
<div class="tab" style="left:1160.0px;top:1246.5px"></div>
<div class="tab" style="left:1227.2px;top:1246.5px"></div>
<div class="tab" style="left:1294.4px;top:1246.5px"></div>
<div class="cl" style="left:1361.6px;top:1225.0px"><span class="cm">//<span class="cj">发</span><span class="cj">送</span><span class="cj">服</span><span class="cj">务</span><span class="cj">异</span><span class="cj">常</span><span class="cj">事</span><span class="cj">件</span></span></div>
<div class="ln" style="top:1274.0px">91</div>
<div class="tab" style="left:1160.0px;top:1294.5px"></div>
<div class="tab" style="left:1227.2px;top:1294.5px"></div>
<div class="tab" style="left:1294.4px;top:1294.5px"></div>
<div class="cl" style="left:1361.6px;top:1273.0px"><span class="c">ErrorLogPublisher</span>.<span class="si">publishEvent</span>(e,<span class="sp">·</span><span class="c">UrlUtil</span>.<span class="si">getPath</span>(<span class="c">Objects</span>.<span class="si">requireNonNull</span>(<span class="c">WebUtil</span>.<span class="si">getRequest</span>()).getRequestURI()));</div>
<div class="ln" style="top:1322.0px">92</div>
<div class="tab" style="left:1160.0px;top:1342.5px"></div>
<div class="tab" style="left:1227.2px;top:1342.5px"></div>
<div class="cl" style="left:1294.4px;top:1321.0px">}</div>
<div class="ln" style="top:1370.0px">93</div>
<div class="tab" style="left:1160.0px;top:1390.5px"></div>
<div class="tab" style="left:1227.2px;top:1390.5px"></div>
<div class="cl" style="left:1294.4px;top:1369.0px"><span class="cm">//</span><span class="sp">·</span><span class="cm"><span class="cj">生</span><span class="cj">产</span><span class="cj">环</span><span class="cj">境</span><span class="cj">屏</span><span class="cj">蔽</span><span class="cj">具</span><span class="cj">体</span><span class="cj">异</span><span class="cj">常</span><span class="cj">信</span><span class="cj">息</span><span class="cj">返</span><span class="cj">回</span></span></div>
<div class="ln" style="top:1418.0px">94</div>
<div class="tab" style="left:1160.0px;top:1438.5px"></div>
<div class="tab" style="left:1227.2px;top:1438.5px"></div>
<div class="cl" style="left:1294.4px;top:1417.0px"><span class="k">if</span><span class="sp">·</span>(<span class="f">bladeProperties</span>.isProd())<span class="sp">·</span>{</div>
<div class="ln" style="top:1466.0px">95</div>
<div class="tab" style="left:1160.0px;top:1486.5px"></div>
<div class="tab" style="left:1227.2px;top:1486.5px"></div>
<div class="tab" style="left:1294.4px;top:1486.5px"></div>
<div class="cl" style="left:1361.6px;top:1465.0px"><span class="k">return</span><span class="sp">·</span><span class="c">R</span>.<span class="si">fail</span>(<span class="c">ResultCode</span>.<span class="sf">INTERNAL_SERVER_ERROR</span>);</div>
<div class="ln" style="top:1514.0px">96</div>
<div class="tab" style="left:1160.0px;top:1534.5px"></div>
<div class="tab" style="left:1227.2px;top:1534.5px"></div>
<div class="cl" style="left:1294.4px;top:1513.0px">}</div>
<div class="ln" style="top:1562.0px">97</div>
<div class="tab" style="left:1160.0px;top:1582.5px"></div>
<div class="tab" style="left:1227.2px;top:1582.5px"></div>
<div class="cl" style="left:1294.4px;top:1561.0px"><span class="k">return</span><span class="sp">·</span><span class="c">R</span>.<span class="si">fail</span>(<span class="c">ResultCode</span>.<span class="sf">INTERNAL_SERVER_ERROR</span>,<span class="sp">·</span>(<span class="c">Func</span>.<span class="si">isEmpty</span>(e.getMessage())<span class="sp">·</span>?<span class="sp">·</span><span class="c">ResultCode</span>.<span class="sf">INTERNAL_SERVER_ERROR</span>.getMessage()<span class="sp">·</span>:<span class="sp">·</span>e.getMessage()));</div>
<div class="ln" style="top:1610.0px">98</div>
<div class="tab" style="left:1160.0px;top:1630.5px"></div>
<div class="cl" style="left:1227.2px;top:1609.0px">}</div>
<div class="ln" style="top:1658.0px">99</div>
<div class="cl" style="left:1160.0px;top:1657.0px"></div>
<div class="ln" style="top:1706.0px">100</div>
<div class="cl" style="left:1160.0px;top:1705.0px">}</div>
<div class="vg" style="left:1223.2px;top:453.5px;height:96px"></div>
<div class="vg" style="left:1223.2px;top:789.5px;height:96px"></div>
<div class="vg" style="left:1223.2px;top:1125.5px;height:480px"></div>
<div class="vg" style="left:1290.4px;top:1221.5px;height:96px"></div>
<div class="vg" style="left:1290.4px;top:1461.5px;height:48px"></div>
</div>
<div class="a" style="left:1022px;top:72px;width:2432px;height:62px;background:#372425;border-top:2px solid #5a3433;border-bottom:2px solid #5a3433"></div>
<svg class="a" style="left:1048px;top:88px" width="28" height="28" viewBox="0 0 28 28"><circle cx="14" cy="14" r="14" fill="#c75d53"/><rect x="11.8" y="6" width="4.4" height="10" rx="2.2" fill="#fff"/><circle cx="14" cy="20.5" r="2.4" fill="#fff"/></svg>
<div class="a" style="left:1093.5px;top:80px;height:44px;line-height:44px;font-size:30.4px;white-space:pre;color:#dfe1e5">Library source does not match the bytecode for class BladeRestExceptionTranslator</div>
<div class="a" style="left:3336px;top:81px;height:44px;line-height:44px;font-size:30.4px;white-space:pre;color:#548af7">Open .class file</div>
<div class="a" style="left:1168.4px;top:409.8px;width:1048.1px;height:350.1px;border:6.3px solid #e8473b;border-radius:2px"></div>
<div class="a" style="left:1220.7px;top:1261.8px;width:1995.4px;height:500.2px;border:6.3px solid #e8473b;border-radius:2px"></div>
<div class="a" style="left:3071px;top:1774px;width:17px;height:16px;border-left:4.5px solid #5bbd74;border-top:4.5px solid #5bbd74"></div>
<div class="a" style="left:3350px;top:1819px;width:17px;height:16px;border-right:4.5px solid #5bbd74;border-bottom:4.5px solid #5bbd74"></div>
<div class="a" style="left:3085px;top:1781px;height:48px;line-height:48px;font-size:36px;font-weight:bold;font-style:italic;color:#5bbd74;white-space:pre;-webkit-text-stroke:1px #5bbd74;transform:scaleX(1.2);transform-origin:0 50%">Blade</div>
<div class="a" style="left:3204.0px;top:1781px;width:36.5px;text-align:center;height:48px;line-height:48px;font-size:31px;font-weight:bold;font-style:italic;color:#5bbd74;-webkit-text-stroke:1.5px #5bbd74">技</div>
<div class="a" style="left:3240.5px;top:1781px;width:36.5px;text-align:center;height:48px;line-height:48px;font-size:31px;font-weight:bold;font-style:italic;color:#5bbd74;-webkit-text-stroke:1.5px #5bbd74">术</div>
<div class="a" style="left:3277.0px;top:1781px;width:36.5px;text-align:center;height:48px;line-height:48px;font-size:31px;font-weight:bold;font-style:italic;color:#5bbd74;-webkit-text-stroke:1.5px #5bbd74">社</div>
<div class="a" style="left:3313.5px;top:1781px;width:36.5px;text-align:center;height:48px;line-height:48px;font-size:31px;font-weight:bold;font-style:italic;color:#5bbd74;-webkit-text-stroke:1.5px #5bbd74">区</div>
<svg class="a" style="left:0;top:0" width="3454" height="1896" viewBox="0 0 3454 1896">
<path d="M819.0 772.0 L850.0 805.0 L836.7 808.6 L919.2 1088.6 L916.8 1089.4 L824.3 812.4 L811.0 816.0 Z" fill="#e5453b" stroke="#e5453b" stroke-width="2" stroke-linejoin="round"/>
<path d="M689.6 1307.8 L722.7 1341.0 L708.9 1344.4 L801.0 1636.6 L798.6 1637.4 L696.5 1348.6 L682.7 1352.0 Z" fill="#e5453b" stroke="#e5453b" stroke-width="2" stroke-linejoin="round"/>
</svg>
</body></html>
